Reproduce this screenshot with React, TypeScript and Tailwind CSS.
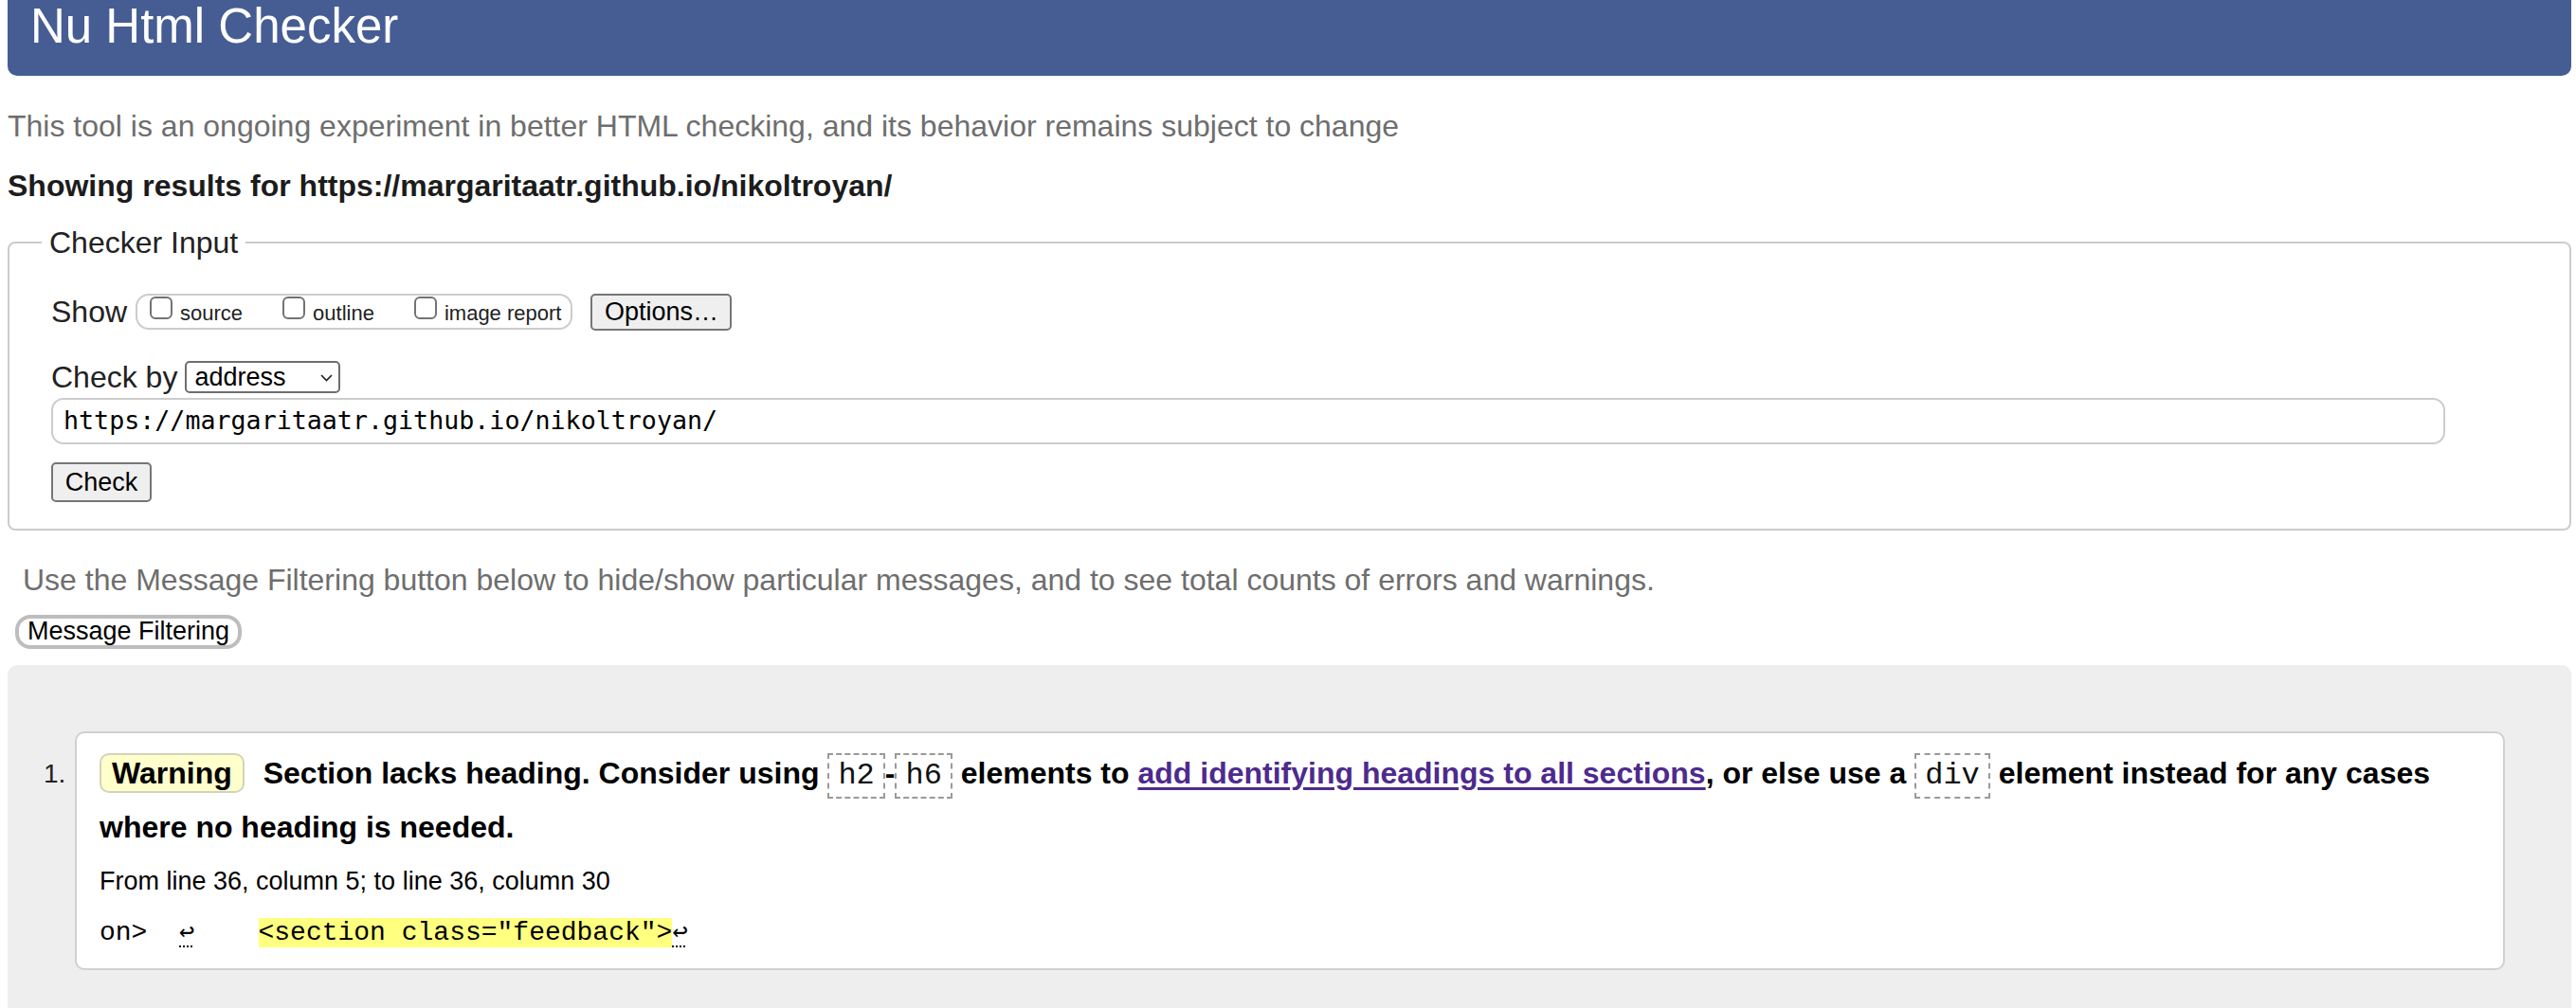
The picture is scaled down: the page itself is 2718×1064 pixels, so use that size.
import React from "react";

const sans = "font-['Liberation_Sans',Arial,Helvetica,sans-serif]";
const mono = "font-['Liberation_Mono','DejaVu_Sans_Mono',monospace]";

function Checkbox({ label }: { label: string }) {
  return (
    <label className="flex items-start">
      <span className="block w-[24px] h-[24px] rounded-[6px] border-2 border-[#737373] bg-white" />
      <span className="ml-[8px] mt-[7px] text-[22px] leading-[22px] text-[#222]">{label}</span>
    </label>
  );
}

function Code({ children }: { children: React.ReactNode }) {
  return (
    <code className={`${mono} inline-block font-normal text-[32px] leading-[36px] py-[4px] px-[9px] border-2 border-dashed border-[#9a9a9a] text-[#111]`}>
      {children}
    </code>
  );
}

function Ret() {
  return (
    <span className="underline decoration-dotted decoration-[2px] underline-offset-[7px] font-['DejaVu_Sans_Mono',monospace] text-[27px]">
      ↩
    </span>
  );
}

export default function App() {
  return (
    <div className={`${sans} min-h-screen bg-white text-[32px] text-[#222] pl-[8px] pr-[5px]`}>
      <h1 className="h-[80px] bg-[#465d94] rounded-b-[10px] pl-[24px] pt-[2px] text-white text-[51px] leading-none font-normal">
        Nu Html Checker
      </h1>

      <p className="mt-[33px] leading-[40px] text-[#6e6e6e]">
        This tool is an ongoing experiment in better HTML checking, and its behavior remains subject to change
      </p>
      <p className="mt-[23px] leading-[40px] font-bold text-[#1c1c1c]">
        Showing results for https://margaritaatr.github.io/nikoltroyan/
      </p>

      <fieldset className="mt-[20px] border-2 border-[#cccccc] rounded-[8px] pl-[44px] pb-[27px]">
        <legend className="ml-[-10px] px-[8px] leading-[40px] text-[#222]">Checker Input</legend>
        <div className="pt-[34px]">
          <div className="flex items-center h-[38px]">
            <span className="text-[#222]">Show</span>
            <div className="ml-[9px] flex items-start gap-[42px] h-[38px] pt-[1px] pl-[13px] pr-[10px] border-2 border-[#cccccc] rounded-[14px]">
              <Checkbox label="source" />
              <Checkbox label="outline" />
              <Checkbox label="image report" />
            </div>
            <button className="ml-[19px] w-[149px] h-[39px] bg-[#efefef] border-2 border-[#767676] rounded-[5px] text-[27px] leading-none text-black">
              Options…
            </button>
          </div>

          <div className="mt-[33px] flex items-center h-[34px]">
            <span className="text-[#222]">Check by</span>
            <div className="ml-[8px] flex items-center justify-between w-[164px] h-[34px] pl-[8px] pr-[6px] border-2 border-[#6e6e6e] rounded-[5px] bg-white">
              <span className="text-[27px] leading-none text-black">address</span>
              <svg width="13" height="8" viewBox="0 0 13 8" className="mt-[2px]">
                <path d="M1 1 L6.5 6.5 L12 1" fill="none" stroke="#222" strokeWidth="1.6" />
              </svg>
            </div>
          </div>

          <div className="mt-[5px] w-[2526px] h-[49px] flex items-center pl-[11px] border-2 border-[#cccccc] rounded-[13px] bg-white">
            <span className="font-['DejaVu_Sans_Mono',monospace] text-[26.67px] leading-none text-black">
              https://margaritaatr.github.io/nikoltroyan/
            </span>
          </div>

          <button className="mt-[19px] w-[106px] h-[42px] bg-[#efefef] border-2 border-[#767676] rounded-[5px] text-[27px] leading-none text-black">
            Check
          </button>
        </div>
      </fieldset>

      <p className="mt-[32px] pl-[16px] leading-[40px] text-[#6e6e6e]">
        Use the Message Filtering button below to hide/show particular messages, and to see total counts of errors and warnings.
      </p>
      <button className="block mt-[17px] ml-[8px] w-[239px] h-[36px] bg-white border-4 border-[#bdbdbd] rounded-[16px] text-[27px] leading-none text-black">
        Message Filtering
      </button>

      <div className="mt-[17px] bg-[#eeeeee] rounded-t-[10px] pt-[70px] pl-[38px] pr-[70px] pb-[60px]">
        <div className="flex">
          <span className="w-[33px] shrink-0 pt-[16px] text-[28px] leading-[57px] text-[#222]">1.</span>
          <div className="flex-1 bg-white border-2 border-[#d0d0d0] rounded-[10px] pt-[14px] pb-[16px] pl-[24px] pr-[24px] text-black">
            <p className="font-bold leading-[57px]">
              <strong className="inline-block mr-[11px] px-[11px] leading-[38px] bg-[#ffffcc] border-2 border-[#d3d3b8] rounded-[10px]">
                Warning
              </strong>{" "}
              Section lacks heading. Consider using <Code>h2</Code>-<Code>h6</Code> elements to{" "}
              <a href="#" className="text-[#4e2a8e] underline decoration-[3px] underline-offset-[4px]">
                add identifying headings to all sections
              </a>
              , or else use a <Code>div</Code> element instead for any cases where no heading is needed.
            </p>
            <p className="text-[27px] leading-[57px]">From line 36, column 5; to line 36, column 30</p>
            <p className={`${mono} text-[28px] leading-[43px] whitespace-pre pt-[2px]`}>
              {"on>  "}
              <Ret />
              {"    "}
              <span className="bg-[#ffff80]">{'<section class="feedback">'}</span>
              <Ret />
            </p>
          </div>
        </div>
      </div>
    </div>
  );
}
